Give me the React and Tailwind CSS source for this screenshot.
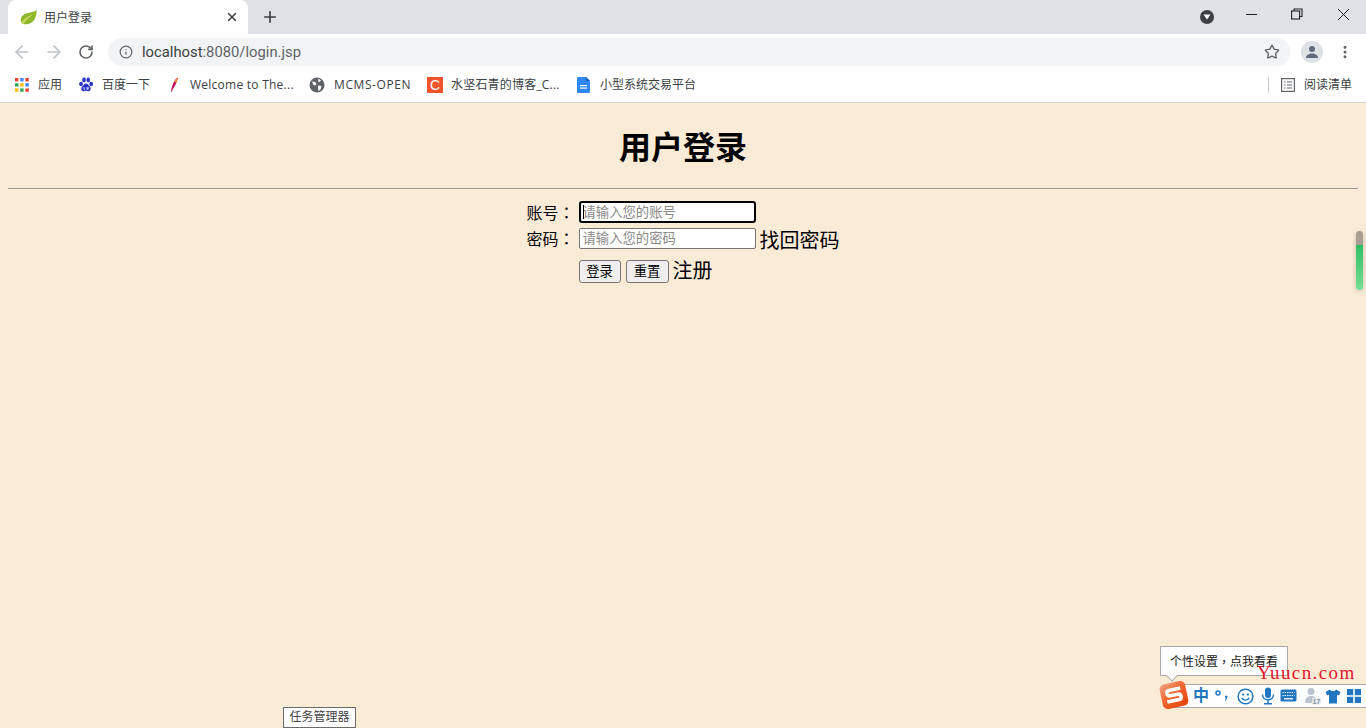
import React from "react";
import { ArrowLeft, ArrowRight, RotateCw, Info, Star, X, Plus, MoreVertical } from "lucide-react";

const F = { fontFamily: '"Liberation Sans","Noto Sans CJK SC",sans-serif' };

function Bm({ icon, label, className = "", textClass = "ml-[8px]" }) {
  return (
    <div className={"flex items-center shrink-0 " + className}>
      <span className="w-4 h-4 flex items-center justify-center shrink-0">{icon}</span>
      <span className={"text-[12px] text-[#3c4043] whitespace-nowrap " + textClass} style={{ fontFamily: '"Open Sans","Noto Sans CJK SC",sans-serif' }}>{label}</span>
    </div>
  );
}

const Apps = () => (
  <svg width="14" height="14" viewBox="0 0 14 14">
    {[["#ea4335","#4285f4","#ea4335"],["#34a853","#fbbc04","#4285f4"],["#fbbc04","#34a853","#ea4335"]].map((r,y)=>r.map((c,x)=>(
      <rect key={x+"-"+y} x={x*5.2} y={y*5.2} width="3.4" height="3.4" fill={c}/>
    )))}
  </svg>
);
const Paw = () => (
  <svg width="16" height="16" viewBox="0 0 16 16" fill="#2932c8">
    <ellipse cx="3" cy="7" rx="1.900" ry="2.300"/><ellipse cx="6" cy="3" rx="1.800" ry="2.400"/><ellipse cx="10.200" cy="3" rx="1.800" ry="2.400"/><ellipse cx="13.200" cy="7" rx="1.900" ry="2.300"/>
    <path d="M8 6.500c-2 0-2.600 2-4 3.300-1.400 1.400-.6 4.700 1.800 4.400 1-.1 1.500-.4 2.200-.4s1.300.3 2.200.4c2.400.3 3.200-3 1.800-4.400C10.600 8.500 10 6.500 8 6.500z"/>
    <path d="M6 10v2.300h1M9 10v2.300h1.200V10" fill="none" stroke="#fff" strokeWidth=".8"/>
  </svg>
);
const Feather = () => (
  <svg width="16" height="16" viewBox="0 0 16 16">
    <path d="M11.500 0.500c.5 2-1 6-4.500 11.500l-1.500 3-.7-.3 .9-4C7 6 9 2 11.500 .5z" fill="#c2185b"/>
    <path d="M11.500 .5c.3 1.500-.3 3-1 4.500L8.300 5.200C9 3.500 10 1.500 11.500 .5z" fill="#f08c2e"/>
  </svg>
);
const Doc = () => (
  <svg width="16" height="16" viewBox="0 0 16 16">
    <path d="M2 0h8l4 4v11a1 1 0 0 1-1 1H2a1 1 0 0 1-1-1V1a1 1 0 0 1 1-1z" fill="#2f88f5"/>
    <path d="M10 0l4 4h-4z" fill="#1b62c4"/>
    <rect x="4" y="8" width="7" height="1.200" fill="#fff"/><rect x="4" y="10.500" width="7" height="1.200" fill="#fff"/>
  </svg>
);
const Leaf = () => (
  <svg width="17" height="16" viewBox="0 0 17 16">
    <path d="M16.500 .5C15 3 12 3 8 4 3 5 .5 8 .8 11.500c.1 1.500 1 3 2.500 3.500 4 1 9-.5 11.500-5 1.300-2.500 2-6 1.700-9.500z" fill="#8fb82e"/>
    <path d="M1.500 14C4 9 8 7 13 5.500 9 8.500 6 11 3.500 15z" fill="#c7d95c"/>
  </svg>
);
const SolidGlobe = () => (
  <svg width="16" height="16" viewBox="0 0 16 16">
    <circle cx="8" cy="8" r="7.500" fill="#5f6368"/>
    <path d="M3 4.500l3 .5 1.500 2L6 8.500 4.500 8zM9.500 1.500l2.500 2-1.500 1.500-1.500-.5zM9 8.500l3.500.5-1 3.500-2 1.500-.5-3z" fill="#fff"/>
  </svg>
);
const Sogou = () => (
  <svg width="30" height="28" viewBox="0 0 30 28" className="rotate-[-12deg]">
    <defs>
      <linearGradient id="sg" x1="0" y1="0" x2="0.6" y2="1">
        <stop offset="0" stopColor="#f2a488"/>
        <stop offset="0.5" stopColor="#ee6a32"/>
        <stop offset="1" stopColor="#e8480f"/>
      </linearGradient>
    </defs>
    <rect x="2" y="1.500" width="26" height="25" rx="5" fill="url(#sg)"/>
    <path d="M22.500 8.500H11c-3.500 0-3.500 5.500 0 5.500h8c3.500 0 3.500 5.500 0 5.500H7" fill="none" stroke="#fff" strokeWidth="3.600"/>
  </svg>
);

function ImeIcons() {
  const c = "#2276c0";
  return (
    <>
      <span className="text-[16px] font-bold text-[#2276c0] leading-none">中</span>
      <svg width="19" height="18" viewBox="0 0 19 18" className="ml-[6px]"><circle cx="3" cy="6" r="2" fill="none" stroke={c} strokeWidth="1.500"/><path d="M11 8.500c1.500 0 2 1.300 1 3l-2 3 .6-3.500c-1-1-.6-2.500.4-2.500z" fill={c}/></svg>
      <svg width="17" height="17" viewBox="0 0 18 18" className="ml-[3px]"><circle cx="9" cy="9" r="7.800" fill="none" stroke={c} strokeWidth="1.600"/><circle cx="6.500" cy="7" r="1.200" fill={c}/><circle cx="11.500" cy="7" r="1.200" fill={c}/><path d="M5 10.500c1.500 3 6.500 3 8 0" fill="none" stroke={c} strokeWidth="1.400"/></svg>
      <svg width="14" height="18" viewBox="0 0 14 18" className="ml-[7px]"><rect x="4" y="0.500" width="6" height="10.500" rx="3" fill={c}/><path d="M1.500 7.500c0 7 11 7 11 0M7 13v3M3 16.800h8" fill="none" stroke={c} strokeWidth="1.500"/></svg>
      <svg width="17" height="14" viewBox="0 0 17 14" className="ml-[5px]"><rect x="0.500" y="0.500" width="16" height="12" rx="1.500" fill={c}/><path d="M2.500 3.500h12M2.500 6.500h12" stroke="#fff" strokeWidth="1.200" strokeDasharray="1.300 1"/><path d="M4 9.800h9" stroke="#fff" strokeWidth="1.300"/></svg>
      <svg width="18" height="18" viewBox="0 0 18 18" className="ml-[7px]"><circle cx="7" cy="4.500" r="3.500" fill="#b9c4cf"/><path d="M1 16c0-5 2.500-7 6-7s5 2 5 3v4z" fill="#b9c4cf"/><rect x="8" y="11" width="9" height="6.500" fill="#e7ebef"/><text x="8.500" y="17" fontSize="7" fontWeight="700" fill="#8a97a3" style={{fontFamily:'"Liberation Sans",sans-serif'}}>17</text></svg>
      <svg width="16" height="15" viewBox="0 0 16 15" className="ml-[3px]"><path d="M5 .5L0.500 3l1.500 3.500 2-.7V14.500h8V5.800l2 .7L15.500 3 11 .5C10 2.500 6 2.500 5 .5z" fill={c}/></svg>
      <svg width="14" height="14" viewBox="0 0 14 14" className="ml-[6px]"><rect width="6.200" height="6.200" fill={c}/><rect x="7.800" width="6.200" height="6.200" fill={c}/><rect y="7.800" width="6.200" height="6.200" fill={c}/><rect x="7.800" y="7.800" width="6.200" height="6.200" fill={c}/></svg>
    </>
  );
}

const Colon = () => <span style={{ fontFamily: '"Noto Sans CJK TC",sans-serif' }}>：</span>;

export default function App() {
  return (
    <div className="relative w-[1366px] h-[728px] overflow-hidden flex flex-col bg-[#faebd7]" style={F}>
      {/* tab strip */}
      <div className="h-[34px] bg-[#dee1e6] flex items-end shrink-0">
        <div className="ml-[8px] w-[240px] h-[34px] bg-white rounded-t-[8px] flex items-center pl-[12px] pr-[9px]">
          <Leaf />
          <span className="ml-[7px] mt-[1px] text-[12px] text-[#3c4043]">用户登录</span>
          <X size={14} strokeWidth={2.500} className="ml-auto text-[#3c4043]" />
        </div>
        <div className="h-[34px] flex items-center ml-[13px]">
          <Plus size={18} strokeWidth={2.200} className="text-[#3c4043]" />
        </div>
        <div className="ml-auto h-[34px] flex items-center">
          <span className="w-[14px] h-[14px] rounded-full bg-[#3c4043] flex items-center justify-center mr-[32px]">
            <svg width="8" height="6" viewBox="0 0 8 6"><path d="M0.500 .5h7L4 5.500z" fill="#fff"/></svg>
          </span>
          <span className="w-[11px] h-px bg-[#202124] mt-[-5px] mr-[34px]" />
          <svg width="12" height="12" viewBox="0 0 12 12" className="mt-[-6px] mr-[34px]" fill="none" stroke="#202124" strokeWidth="1.100"><rect x="0.600" y="3" width="8" height="8"/><path d="M3 3V1h8v7.500H8.600"/></svg>
          <svg width="13" height="13" viewBox="0 0 13 13" className="mt-[-6px] mr-[16px]" fill="none" stroke="#202124" strokeWidth="1"><path d="M1 1l11 11M12 1L1 12"/></svg>
        </div>
      </div>
      {/* toolbar */}
      <div className="h-[34px] pt-[2px] bg-white flex items-center shrink-0">
        <ArrowLeft size={20} strokeWidth={2} className="ml-[12px] text-[#bdc1c6]" />
        <ArrowRight size={20} strokeWidth={2} className="ml-[12px] text-[#bdc1c6]" />
        <RotateCw size={16} strokeWidth={2.400} className="ml-[14px] text-[#5f6368]" />
        <div className="ml-[14px] w-[1182px] h-[28px] bg-[#f1f3f4] rounded-full flex items-center pl-[11px] pr-[10px]">
          <Info size={14} strokeWidth={2} className="text-[#5f6368]" />
          <span className="ml-[9px] text-[14.800px] text-[#5f6368]" style={{ fontFamily: '"Roboto",sans-serif' }}><span className="text-[#3c4043]">localhost</span>:8080/login.jsp</span>
          <Star size={16} strokeWidth={2} className="ml-auto text-[#5f6368]" />
        </div>
        <span className="ml-[11px] w-[22px] h-[22px] rounded-full bg-[#dee1e6] flex items-center justify-center">
          <svg width="14" height="14" viewBox="0 0 14 14" fill="#5f6b7c"><circle cx="7" cy="4" r="3"/><path d="M1 13c0-3 3-4.500 6-4.500s6 1.500 6 4.500z"/></svg>
        </span>
        <MoreVertical size={16} strokeWidth={2.500} className="ml-[14px] text-[#5f6368]" />
      </div>
      {/* bookmarks */}
      <div className="h-[35px] bg-white border-b border-[#d5d7da] flex items-center shrink-0 pb-[1px]">
        <Bm className="ml-[14px] w-[56px]" icon={<Apps />} label="应用" />
        <Bm className="ml-[8px] w-[80px]" icon={<Paw />} label="百度一下" />
        <Bm className="ml-[8px] w-[135px]" textClass="ml-[8px] tracking-[0.25px]" icon={<Feather />} label="Welcome to The..." />
        <Bm className="ml-[8px] w-[118px]" textClass="ml-[9px] tracking-[0.6px]" icon={<SolidGlobe />} label="MCMS-OPEN" />
        <Bm className="w-[149px]" textClass="ml-[8px] tracking-[0.2px]" icon={<span className="w-4 h-4 bg-[#f0552d] text-white text-[14px] leading-4 text-center">C</span>} label="水坚石青的博客_C..." />
        <Bm className="" icon={<Doc />} label="小型系统交易平台" />
        <div className="ml-auto flex items-center pr-[14px]">
          <span className="w-px h-[16px] bg-[#c8cacd] mr-[12px]" />
          <svg width="14" height="14" viewBox="0 0 14 14" fill="none" stroke="#5f6368" strokeWidth="1.200"><rect x="0.600" y="0.600" width="12.800" height="12.800"/><path d="M3 4h1.500M6 4h5M3 7h1.500M6 7h5M3 10h1.500M6 10h5"/></svg>
          <span className="ml-[9px] text-[12px] text-[#3c4043]">阅读清单</span>
        </div>
      </div>
      {/* page */}
      <div className="px-[8px] flex-1 text-black">
        <h1 className="text-[32px] font-bold text-center leading-[37px] mt-[27px]">用户登录</h1>
        <hr className="mt-[21px] border-t border-b-0 border-[#9a9a9a] h-[1px]" />
        <div className="flex justify-center mt-[12px]">
          <div className="grid grid-cols-[52px_auto] w-[313px] gap-x-0 items-center">
            <span className="text-[16px] h-[21px] leading-[21px] whitespace-nowrap">账号<Colon /></span>
            <div className="relative w-[177px]">
              <input readOnly placeholder="请输入您的账号" className="w-[177px] h-[22px] block bg-white border-2 border-black rounded-[3px] px-[2px] text-[13.330px] placeholder:text-[#8a8a8a] outline-none" />
              <span className="absolute left-[4px] top-[4px] w-px h-[14px] bg-black" />
            </div>
            <span className="text-[16px] mt-[5px] h-[21px] leading-[21px] whitespace-nowrap">密码<Colon /></span>
            <div className="mt-[5px] flex items-center h-[21px]">
              <input readOnly placeholder="请输入您的密码" className="w-[177px] h-[21px] bg-white border border-[#767676] rounded-[2px] px-[3px] text-[13.330px] placeholder:text-[#8a8a8a] outline-none" />
              <a className="ml-[4px] h-[21px] text-[20px] leading-[27px] whitespace-nowrap">找回密码</a>
            </div>
            <span />
            <div className="mt-[11px] flex items-center">
              <button className="w-[42px] h-[23px] bg-[#efefef] border border-[#767676] rounded-[3px] text-[13.330px]">登录</button>
              <button className="ml-[5px] w-[43px] h-[23px] bg-[#efefef] border border-[#767676] rounded-[3px] text-[13.330px]">重置</button>
              <a className="ml-[4px] text-[20px] leading-[22px] mt-[-1px]">注册</a>
            </div>
          </div>
        </div>
      </div>
      {/* floating: scrollbar widget */}
      <div className="absolute left-[1356px] top-[231px] w-[7px] h-[59px] rounded-full overflow-hidden flex flex-col shadow-[0_1px_5px_rgba(0,0,0,0.2)]">
        <div className="h-[14px] bg-[#a8a093]" />
        <div className="flex-1 bg-gradient-to-b from-[#2bbf66] to-[#74de94]" />
      </div>
      {/* taskbar tooltip */}
      <div className="absolute left-[283px] top-[707px] w-[73px] h-[21px] pb-[2px] border border-[#6b6b6b] bg-white text-[12px] text-[#444] flex items-center justify-center">任务管理器</div>
      {/* IME */}
      <div className="absolute left-[1160px] top-[646px] w-[128px] h-[30px] pt-[1px] bg-white border border-[#a9a9a9] text-[12px] text-[#222] flex items-center justify-center whitespace-nowrap">个性设置<span style={{ fontFamily: '"Noto Sans CJK TC",sans-serif' }}>，</span>点我看看</div>
      <div className="absolute left-[1168px] top-[672px] w-[8px] h-[8px] bg-white border-r border-b border-[#a9a9a9] rotate-45" />
      <div className="absolute left-[1172px] top-[684px] w-[194px] h-[24px] bg-white border-y border-[#a9a9a9] flex items-center pl-[21px]">
        <ImeIcons />
      </div>
      <div className="absolute left-[1159px] top-[681px]"><Sogou /></div>
      <div className="absolute left-[1257px] top-[663px] text-[19px] leading-[20px] tracking-[1.400px] text-[#e0182d] whitespace-nowrap" style={{ fontFamily: '"Liberation Serif",serif' }}>Yuucn.com</div>
    </div>
  );
}
